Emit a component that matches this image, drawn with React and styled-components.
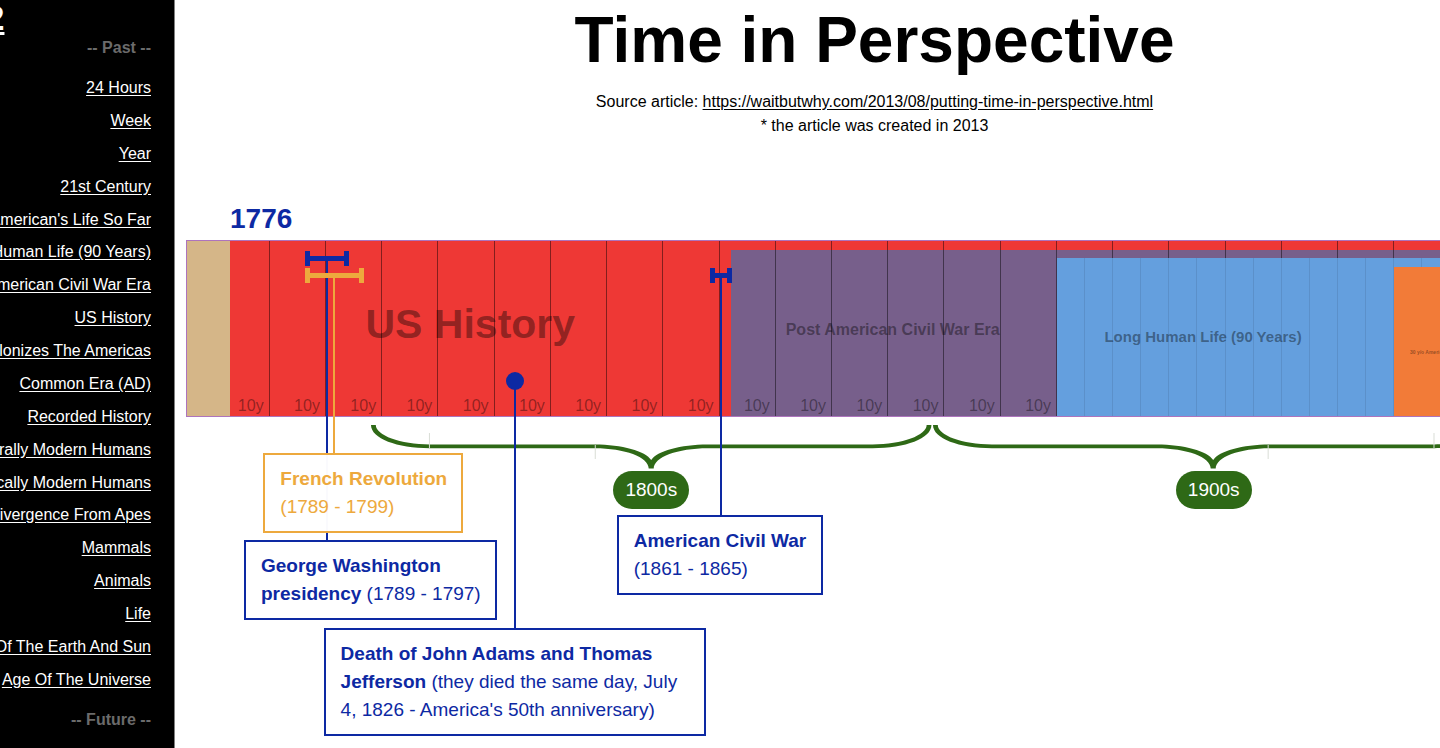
import styled, { createGlobalStyle } from "styled-components"

const START_YEAR = 1776
const END_YEAR = 2013

// position of a year on the track, in percent
const yearToPercent = (year) =>
  ((year - START_YEAR) / (END_YEAR - START_YEAR)) * 100

const colors = {
  blue: "#0d29a3",
  gold: "#eda93d",
  green: "#2e6916",
}

const GlobalStyle = createGlobalStyle`
  * {
    box-sizing: border-box;
  }

  body {
    margin: 0;
    overflow: hidden;
    background-color: #fff;
    color: #000;
    font-family: "Liberation Sans", Arial, sans-serif;
    font-size: 16px;
    line-height: 24px;
  }
`

const Page = styled.div`
  display: flex;
  height: 100vh;
`

const Sidebar = styled.nav`
  flex: 0 0 175px;
  display: flex;
  flex-direction: column;
  align-items: flex-end;
  padding: 0 23px 16px 0;
  overflow: hidden;
  white-space: nowrap;
  background-color: #000;
  border-right: 1px solid #808080;
`

const HomeLink = styled.a`
  align-self: flex-start;
  margin-left: -15px;
  color: #fff;
  font-size: 35px;
  font-weight: bold;
  line-height: 36px;
`

const SidebarTitle = styled.span`
  color: #6b6b6b;
  font-weight: bold;
`

const NavList = styled.ul`
  flex: 1;
  display: flex;
  flex-direction: column;
  align-items: flex-end;
  justify-content: space-between;
  list-style: none;
  margin: 16px 0;
  padding: 0;
`

const NavLink = styled.a`
  color: #fff;
  text-underline-offset: 2px;
`

const Main = styled.main`
  flex: 1;
  min-width: 0;
  padding: 2px 0 0 11px;
  overflow: hidden;
`

const Canvas = styled.div`
  width: calc(100vw - 63px);
`

const Header = styled.header`
  text-align: center;

  p {
    margin: 0;
  }

  a {
    color: inherit;
    text-underline-offset: 2px;
  }
`

const Title = styled.h1`
  margin: 0 0 12px;
  font-size: 64px;
  line-height: 76px;
`

const StartYear = styled.h2`
  margin: 65px 0 5px 44px;
  color: ${colors.blue};
  font-size: 28px;
  line-height: 32px;
`

const Timeline = styled.section`
  position: relative;
  height: 177px;
  display: flex;
  padding-left: 43px;
  background-color: #d5b688;
  border: 1px solid #ad74bd;
  border-right: none;
`

const EraBar = styled.div`
  position: relative;
  flex: ${(props) => props.$years} 1 0;
  min-width: 0;
  display: flex;
  margin-top: ${(props) => props.$inset}px;
  background-color: ${(props) => props.$color};
`

const Ticks = styled.div`
  position: absolute;
  inset: 0;
  display: flex;
`

const Tick = styled.span`
  flex: ${(props) => props.$years} 1 0;
  min-width: 0;
  position: relative;
  border-right: 1px solid rgba(0, 0, 0, ${(props) => (props.$faint ? 0.09 : 0.45)});
`

const TickLabel = styled.span`
  position: absolute;
  right: 5px;
  bottom: 0;
  color: rgba(0, 0, 0, 0.4);
  line-height: 20px;
`

const EraLabel = styled.h3`
  position: relative;
  flex: ${(props) => props.$years} 1 0;
  min-width: 0;
  display: flex;
  align-items: center;
  justify-content: center;
  margin: 0;
  color: rgba(0, 0, 0, 0.4);
  font-size: ${(props) => props.$size}px;
  white-space: nowrap;

  span {
    padding: ${(props) => props.$padding};
  }
`

// everything that is pinned to a year lies over the bars
const Overlay = styled.div`
  position: absolute;
  top: -1px;
  left: 43px;
  right: 0;
`

const CenturyBox = styled.div`
  position: absolute;
  top: 185px;
  left: ${(props) => yearToPercent(props.$from)}%;
  width: ${(props) => yearToPercent(START_YEAR + 100)}%;
  display: flex;
  flex-direction: column;
  align-items: center;
  gap: 2px;

  svg {
    display: block;
    width: 100%;
    height: 44px;
  }
`

const CenturyPill = styled.span`
  padding: 5px 12px;
  border-radius: 19px;
  background-color: ${colors.green};
  color: #fff;
  font-size: 19px;
  line-height: 28px;
`

const EventBox = styled.article`
  position: absolute;
  top: ${(props) => props.$top}px;
  left: ${(props) => yearToPercent(props.$from)}%;
  width: ${(props) => yearToPercent(START_YEAR + props.$to - props.$from)}%;
  display: flex;
  flex-direction: column;
  align-items: center;
  color: ${(props) => props.$color};
`

const Range = styled.div`
  align-self: stretch;
  height: 15px;
  display: flex;
  align-items: center;
  border: solid currentColor;
  border-width: 0 5px;

  &::before {
    content: "";
    flex: 1;
    height: 5px;
    background-color: currentColor;
  }
`

const Dot = styled.div`
  flex: none;
  width: 18px;
  height: 18px;
  border-radius: 50%;
  background-color: currentColor;
`

const Stem = styled.div`
  position: relative;
  width: 2px;
  height: ${(props) => props.$length}px;
  margin-top: -6px;
  background-color: currentColor;
`

const Note = styled.p`
  position: absolute;
  top: 100%;
  left: ${(props) => props.$shift}px;
  width: ${(props) => props.$width}px;
  margin: 0;
  padding: 10px 10px 10px 15px;
  border: 2px solid currentColor;
  background-color: rgba(255, 255, 255, 0.98);
  font-size: 19px;
  line-height: 28px;
`

const pastLinks = [
  "24 Hours",
  "Week",
  "Year",
  "21st Century",
  "30 y/o American's Life So Far",
  "Long Human Life (90 Years)",
  "Post American Civil War Era",
  "US History",
  "Europe Colonizes The Americas",
  "Common Era (AD)",
  "Recorded History",
  "Behaviorally Modern Humans",
  "Anatomically Modern Humans",
  "Divergence From Apes",
  "Mammals",
  "Animals",
  "Life",
  "Age Of The Earth And Sun",
  "Age Of The Universe",
]

// each era holds the next, shorter one at its right end
const eras = [
  {
    name: "US History",
    from: 1776,
    color: "#ee3835",
    inset: 0,
    size: 41,
    padding: "0 20px 10px 0",
    step: 10,
  },
  {
    name: "Post American Civil War Era",
    from: 1865,
    color: "#775f8b",
    inset: 9,
    size: 16,
    padding: "0 2px 6px 0",
    step: 10,
  },
  {
    name: "Long Human Life (90 Years)",
    from: 1923,
    color: "#649fde",
    inset: 8,
    size: 15,
    padding: "0 45px 0 0",
    step: 5,
  },
  {
    name: "30 y/o American's Life So Far",
    from: 1983,
    color: "#f27b38",
    inset: 9,
    size: 5,
    padding: "20px 68px 0 0",
    step: 0,
  },
]

const events = [
  {
    title: "George Washington presidency",
    text: "(1789 - 1797)",
    from: 1789.3,
    to: 1797.2,
    top: 11,
    stem: 280,
    shift: -82,
    width: 253,
    color: colors.blue,
  },
  {
    title: "French Revolution",
    text: "(1789 - 1799)",
    from: 1789.3,
    to: 1799.8,
    top: 28,
    stem: 176,
    shift: -70,
    width: 200,
    color: colors.gold,
  },
  {
    title: "American Civil War",
    text: "(1861 - 1865)",
    from: 1861.3,
    to: 1865.2,
    top: 28,
    stem: 238,
    shift: -103,
    width: 206,
    color: colors.blue,
  },
  {
    title: "Death of John Adams and Thomas Jefferson",
    text: "(they died the same day, July 4, 1826 - America's 50th anniversary)",
    from: 1826.6,
    to: 1826.6,
    top: 132,
    stem: 244,
    shift: -190,
    width: 382,
    color: colors.blue,
  },
]

// decades that the next era covers get a line but no label
const EraTicks = ({ from, step, visibleTo }) => {
  const cells = []
  for (let end = END_YEAR; end > from; end -= step) {
    cells.unshift({ end, years: Math.min(step, end - from) })
  }

  return (
    <Ticks>
      {cells.map(({ end, years }) => (
        <Tick key={end} $years={years} $faint={step < 10}>
          {step === 10 && end <= visibleTo && <TickLabel>10y</TickLabel>}
        </Tick>
      ))}
    </Ticks>
  )
}

const Era = ({ index }) => {
  const era = eras[index]
  const next = eras[index + 1]
  const end = next ? next.from : END_YEAR

  return (
    <EraBar $years={END_YEAR - era.from} $color={era.color} $inset={era.inset}>
      {era.step > 0 && (
        <EraTicks from={era.from} step={era.step} visibleTo={end} />
      )}
      <EraLabel
        $years={end - era.from}
        $size={era.size}
        $padding={era.padding}
      >
        <span>{era.name}</span>
      </EraLabel>
      {next && <Era index={index + 1} />}
    </EraBar>
  )
}

const Century = ({ from, name, seams }) => (
  <CenturyBox $from={from}>
    <svg viewBox="0 0 563 44" preserveAspectRatio="none">
      <path
        fill={colors.green}
        d="M1 0 C1 13.5 27 23.2 60 23.2 H225 C255 23.2 279 32 279 43.5
           H284 C284 32 308 23.2 338 23.2 H503 C536 23.2 562 13.5 562 0
           H557.2 C557.2 10.2 533 19.4 503 19.4 H338 C311 19.4 287 26 281.5 35
           C276 26 252 19.4 225 19.4 H60 C30 19.4 5.8 10.2 5.8 0 Z"
      />
      <path stroke="#d9ddd6" d={seams} />
    </svg>
    <CenturyPill>{name}</CenturyPill>
  </CenturyBox>
)

const Event = ({ event }) => (
  <EventBox
    $from={event.from}
    $to={event.to}
    $top={event.top}
    $color={event.color}
  >
    {event.from === event.to ? <Dot /> : <Range />}
    <Stem $length={event.stem}>
      <Note $shift={event.shift} $width={event.width}>
        <strong>{event.title}</strong> {event.text}
      </Note>
    </Stem>
  </EventBox>
)

const App = () => {
  return (
    <>
      <GlobalStyle />
      <Page>
        <Sidebar>
          <HomeLink href="#home">2</HomeLink>
          <SidebarTitle>-- Past --</SidebarTitle>
          <NavList>
            {pastLinks.map((name) => (
              <li key={name}>
                <NavLink href="#past">{name}</NavLink>
              </li>
            ))}
          </NavList>
          <SidebarTitle>-- Future --</SidebarTitle>
        </Sidebar>
        <Main>
          <Canvas>
            <Header>
              <Title>Time in Perspective</Title>
              <p>
                Source article:{" "}
                <a href="https://waitbutwhy.com/2013/08/putting-time-in-perspective.html">
                  https://waitbutwhy.com/2013/08/putting-time-in-perspective.html
                </a>
              </p>
              <p>* the article was created in 2013</p>
            </Header>
            <StartYear>1776</StartYear>
            <Timeline>
              <Era index={0} />
              <Overlay>
                <Century from={1800.9} name="1800s" seams="M59.5 8 V23 M225.5 20 V34" />
                <Century from={1900.9} name="1900s" seams="M336.5 20 V34 M502.5 8 V23" />
                {events.map((event) => (
                  <Event key={event.title} event={event} />
                ))}
              </Overlay>
            </Timeline>
          </Canvas>
        </Main>
      </Page>
    </>
  )
}

export default App
